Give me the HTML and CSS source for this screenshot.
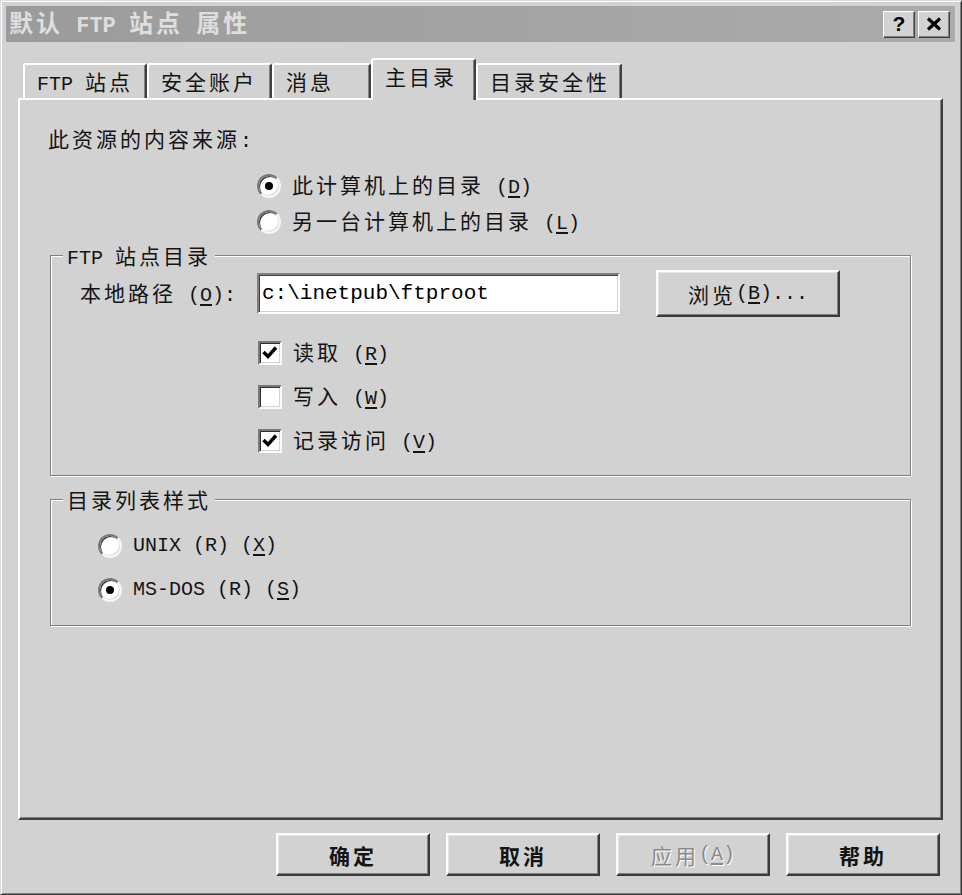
FILE: index.html
```html
<!DOCTYPE html>
<html lang="zh-CN">
<head>
<meta charset="utf-8">
<title>默认 FTP 站点 属性</title>
<link rel="stylesheet" href="styles.css">
</head>
<body>
<div class="window">
  <div class="titlebar">
    <span class="title">默认<span class="en"> FTP </span>站点<span class="en"> </span>属性</span>
    <div class="caption-btns">
      <span class="cap-btn cap-help">?</span>
      <span class="cap-btn"><svg width="16" height="14" viewBox="0 0 16 14"><path d="M2 1.5 L14 12.5 M14 1.5 L2 12.5" stroke="#000" stroke-width="3.2" fill="none"/></svg></span>
    </div>
  </div>

  <div class="tabs">
    <div class="tab tab-ftp"><span class="en">FTP </span>站点</div>
    <div class="tab tab-acct">安全账户</div>
    <div class="tab tab-msg">消息</div>
    <div class="tab tab-home active">主目录</div>
    <div class="tab tab-sec">目录安全性</div>
  </div>

  <div class="panel">
    <div class="source-label">此资源的内容来源<span class="en">:</span></div>
    <div class="source-options">
      <div class="opt"><span class="radio checked"></span><span>此计算机上的目录<span class="en"> (<u>D</u>)</span></span></div>
      <div class="opt"><span class="radio"></span><span>另一台计算机上的目录<span class="en"> (<u>L</u>)</span></span></div>
    </div>

    <fieldset class="group group-dir">
      <legend><span class="en">FTP </span>站点目录</legend>
      <div class="group-body">
        <div class="path-row">
          <span class="path-label">本地路径<span class="en"> (<u>O</u>):</span></span>
          <div class="textbox">c:\inetpub\ftproot</div>
          <div class="btn browse">浏览<span class="en"> (<u>B</u>)...</span></div>
        </div>
        <div class="checks">
          <div class="opt"><span class="checkbox"><svg width="20" height="20" viewBox="0 0 20 20"><path d="M3.5 9 L8 13.5 L16 4.5" stroke="#000" stroke-width="3.4" fill="none"/></svg></span><span>读取<span class="en"> (<u>R</u>)</span></span></div>
          <div class="opt"><span class="checkbox"></span><span>写入<span class="en"> (<u>W</u>)</span></span></div>
          <div class="opt"><span class="checkbox"><svg width="20" height="20" viewBox="0 0 20 20"><path d="M3.5 9 L8 13.5 L16 4.5" stroke="#000" stroke-width="3.4" fill="none"/></svg></span><span>记录访问<span class="en"> (<u>V</u>)</span></span></div>
        </div>
      </div>
    </fieldset>

    <fieldset class="group group-list">
      <legend>目录列表样式</legend>
      <div class="group-body">
        <div class="list-options">
          <div class="opt"><span class="radio"></span><span class="en">UNIX (R) (<u>X</u>)</span></div>
          <div class="opt"><span class="radio checked"></span><span class="en">MS-DOS (R) (<u>S</u>)</span></div>
        </div>
      </div>
    </fieldset>
  </div>

  <div class="buttons">
    <div class="btn dlg">确定</div>
    <div class="btn dlg">取消</div>
    <div class="btn dlg disabled">应用<span class="en"> (<u>A</u>)</span></div>
    <div class="btn dlg">帮助</div>
  </div>
</div>
</body>
</html>
```
FILE: styles.css
```css
* { box-sizing: border-box; }

html, body {
  margin: 0;
  padding: 0;
  background: #d2d2d2;
}

body {
  font-family: "Noto Sans CJK SC", "Noto Sans", sans-serif;
  font-size: 21px;
  line-height: 26px;
  letter-spacing: 3px;
  color: #141414;
}

.en {
  font-family: "Liberation Mono", "DejaVu Sans Mono", monospace;
  font-size: 20px;
  letter-spacing: 0;
}

u {
  text-decoration: underline;
  text-underline-offset: 3px;
}

/* window frame */
.window {
  width: 962px;
  height: 895px;
  background: #d2d2d2;
  border: 1px solid;
  border-color: #dcdcdc #383838 #383838 #dcdcdc;
  box-shadow: inset 1px 1px 0 #fff, inset -1px -1px 0 #808080;
  padding: 5px 6px 0 5px;
  display: flex;
  flex-direction: column;
}

.titlebar {
  height: 36px;
  background: linear-gradient(90deg, #9b9b9b, #ababab);
  display: flex;
  align-items: center;
  justify-content: space-between;
  padding: 0 5px 0 3px;
}

.title {
  color: #dedede;
  font-weight: bold;
  font-size: 24px;
  letter-spacing: 3px;
}

.title .en {
  font-size: 22px;
  font-weight: bold;
}

.caption-btns {
  display: flex;
  gap: 3px;
}

.cap-btn {
  width: 32px;
  height: 27px;
  display: flex;
  align-items: center;
  justify-content: center;
  background: #d2d2d2;
  border: 1px solid;
  border-color: #fff #404040 #404040 #fff;
  box-shadow: inset -1px -1px 0 #808080;
}

.cap-help {
  font-family: "Liberation Sans", Arial, sans-serif;
  font-weight: bold;
  font-size: 21px;
  letter-spacing: 0;
  color: #000;
}

/* tabs */
.tabs {
  display: flex;
  align-items: flex-end;
  height: 40px;
  margin: 16px 0 0 17px;
  position: relative;
  z-index: 1;
}

.tab {
  height: 35px;
  padding: 3px 0 0 12px;
  border-top: 2px solid #fff;
  border-left: 2px solid #fff;
  border-right: 2px solid #404040;
  box-shadow: inset -1px 0 0 #808080;
  border-radius: 3px 3px 0 0;
  background: #d2d2d2;
  white-space: nowrap;
}

.tab-ftp { width: 124px; }
.tab-acct { width: 125px; }
.tab-msg { width: 99px; }
.tab-home { width: 105px; }
.tab-sec { width: 146px; }

.tab.active {
  height: 42px;
  margin-bottom: -2px;
}

/* panel */
.panel {
  margin: 0 12px;
  height: 722px;
  border: 2px solid;
  border-color: #fff #404040 #404040 #fff;
  box-shadow: inset -1px -1px 0 #808080;
  padding: 25px 30px 0 30px;
}

.source-label {
  margin-left: -2px;
}

.source-options {
  margin: 18px 0 0 207px;
  display: flex;
  flex-direction: column;
  gap: 10px;
}

.opt {
  display: flex;
  align-items: center;
  height: 26px;
  gap: 11px;
  white-space: nowrap;
}

.radio {
  position: relative;
  flex: none;
  width: 24px;
  height: 24px;
  border-radius: 50%;
  border: 2px solid;
  border-color: #787878 #f6f6f6 #f6f6f6 #787878;
  background: #fff;
  box-shadow: inset 1px 1px 0 #303030, inset -1px -1px 0 #d8d8d8;
}

.radio.checked::after {
  content: "";
  position: absolute;
  left: 6px;
  top: 6px;
  width: 8px;
  height: 8px;
  border-radius: 50%;
  background: #000;
}

.checkbox {
  flex: none;
  width: 24px;
  height: 24px;
  border: 2px solid;
  border-color: #787878 #fafafa #fafafa #787878;
  background: #fff;
  box-shadow: inset 1px 1px 0 #303030, inset -1px -1px 0 #d4d4d4;
  display: flex;
}

/* group boxes */
.group {
  margin: 10px 0 0;
  padding: 0;
  min-width: 0;
  border: 1px solid #808080;
  box-shadow: 1px 1px 0 #fff, inset 1px 1px 0 #fff;
}

.group-dir {
  margin-top: 7px;
}

.group legend {
  margin-left: 12px;
  padding: 0 4px 0 4px;
  height: 26px;
  line-height: 26px;
  background: #d2d2d2;
}

.group-dir .group-body {
  padding: 2px 0 21px 29px;
}

.path-row {
  display: flex;
  align-items: center;
  height: 47px;
}

.path-label {
  width: 177px;
  flex: none;
  white-space: nowrap;
}

.textbox {
  width: 363px;
  height: 41px;
  flex: none;
  background: #fff;
  border: 2px solid;
  border-color: #808080 #fff #fff #808080;
  box-shadow: inset 1px 1px 0 #404040, inset -1px -1px 0 #d2d2d2;
  padding: 0 0 0 3px;
  display: flex;
  align-items: center;
  font-family: "Liberation Mono", "DejaVu Sans Mono", monospace;
  font-size: 21px;
  letter-spacing: 0;
  color: #000;
}

.btn {
  display: flex;
  align-items: center;
  justify-content: center;
  background: #d2d2d2;
  border: 2px solid;
  border-color: #fcfcfc #3a3a3a #3a3a3a #fcfcfc;
  box-shadow: inset -1px -1px 0 #808080, inset 1px 1px 0 #e6e6e6;
  white-space: nowrap;
}

.browse {
  margin-left: 36px;
  width: 184px;
  height: 47px;
  flex: none;
}

.checks {
  margin: 23px 0 0 178px;
  display: flex;
  flex-direction: column;
  gap: 18px;
}

.group-list .group-body {
  padding: 21px 0 22px 47px;
}

.list-options {
  display: flex;
  flex-direction: column;
  gap: 18px;
}

/* dialog buttons */
.buttons {
  display: flex;
  justify-content: flex-end;
  gap: 16px;
  margin-top: 13px;
  padding-right: 15px;
}

.dlg {
  width: 154px;
  height: 43px;
  font-weight: bold;
}

.dlg.disabled {
  font-weight: normal;
  color: #8a8a8a;
  text-shadow: 1px 1px 0 #fff;
}
```
